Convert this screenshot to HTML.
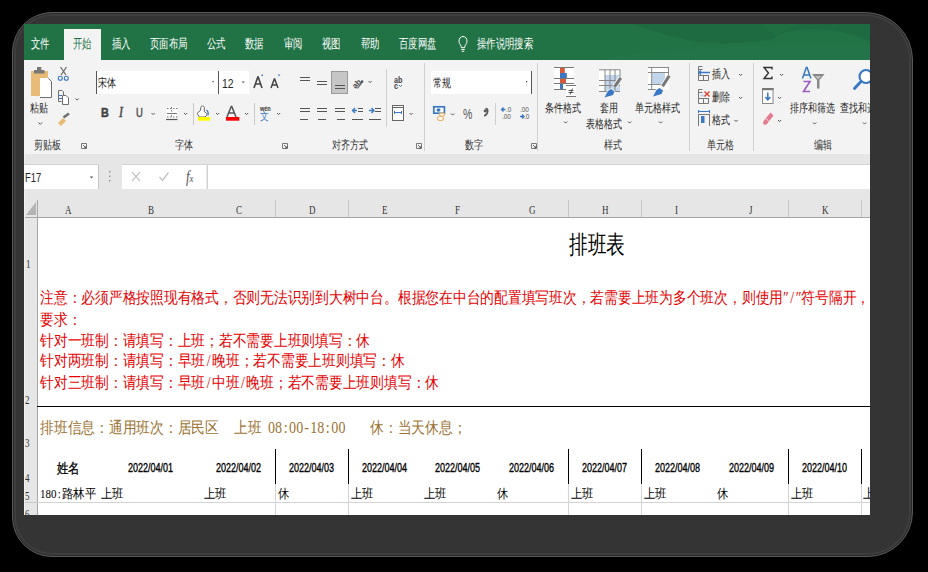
<!DOCTYPE html>
<html><head><meta charset="utf-8">
<style>
*{margin:0;padding:0;box-sizing:border-box}
html,body{width:928px;height:572px;overflow:hidden;background:#000;position:relative;font-family:"Liberation Sans",sans-serif}
.a{position:absolute}
#shadow{left:12px;top:12px;width:901px;height:545px;border-radius:40px 48px 45px 40px;background:#343434;border:1px solid #5a5a5a;box-shadow:inset 0 0 0 1px #2a2a2a,inset 0 0 0 3px #3e3e3e}
#win{left:24px;top:24px;width:846px;height:491px;overflow:hidden;background:#fff}
.t{position:absolute;white-space:nowrap;transform-origin:0 0;line-height:1}
</style></head><body>
<div id="shadow" class="a"></div>
<div id="win" class="a">
<div class="a" style="left:0px;top:0px;width:846px;height:36px;background:#217346;"></div>
<div class="a" style="left:40px;top:5px;width:37px;height:31px;background:#f3f3f3;"></div>
<div class="a" style="left:0px;top:36px;width:846px;height:94px;background:#f3f3f3;"></div>
<div class="a" style="left:0px;top:130px;width:846px;height:46px;background:#e6e6e6;"></div>
<div class="a" style="left:0px;top:176px;width:846px;height:17px;background:#e6e6e6;"></div>
<div class="a" style="left:0px;top:193px;width:846px;height:1px;background:#a6a6a6;"></div>
<div class="a" style="left:0px;top:194px;width:13px;height:297px;background:#e6e6e6;"></div>
<div class="a" style="left:13px;top:176px;width:1px;height:315px;background:#a6a6a6;"></div>
<div class="a" style="left:14px;top:194px;width:832px;height:297px;background:#ffffff;"></div>
<div class="a" style="left:72px;top:47px;width:122px;height:23px;background:#fff;"></div>
<div class="a" style="left:72px;top:47px;width:1px;height:23px;background:#555;"></div>
<div class="a" style="left:194px;top:47px;width:1px;height:23px;background:#555;"></div>
<div class="a" style="left:195px;top:47px;width:30px;height:23px;background:#fff;"></div>
<div class="a" style="left:169px;top:79px;width:1px;height:22px;background:#c8c8c8;"></div>
<div class="a" style="left:230px;top:79px;width:1px;height:22px;background:#c8c8c8;"></div>
<div class="a" style="left:362px;top:45px;width:1px;height:58px;background:#cfcfcf;"></div>
<div class="a" style="left:400px;top:39px;width:1px;height:88px;background:#cfcfcf;"></div>
<div class="a" style="left:407px;top:47px;width:101px;height:23px;background:#fff;"></div>
<div class="a" style="left:507px;top:47px;width:1px;height:23px;background:#555;"></div>
<div class="a" style="left:471px;top:79px;width:1px;height:22px;background:#cfcfcf;"></div>
<div class="a" style="left:513px;top:39px;width:1px;height:88px;background:#cfcfcf;"></div>
<div class="a" style="left:665px;top:39px;width:1px;height:88px;background:#cfcfcf;"></div>
<div class="a" style="left:729px;top:39px;width:1px;height:88px;background:#cfcfcf;"></div>
<div class="a" style="left:0px;top:140px;width:75px;height:25px;background:#fff;border-top:1px solid #d2d2d2;border-right:1px solid #c6c6c6"></div>
<div class="a" style="left:98px;top:140px;width:84px;height:25px;background:#fff;border-top:1px solid #d2d2d2"></div>
<div class="a" style="left:183px;top:140px;width:663px;height:25px;background:#fff;border-top:1px solid #d2d2d2;border-left:1px solid #d2d2d2"></div>
<div class="a" style="left:251px;top:176px;width:1px;height:17px;background:#c6c6c6;"></div>
<div class="a" style="left:324px;top:176px;width:1px;height:17px;background:#c6c6c6;"></div>
<div class="a" style="left:544px;top:176px;width:1px;height:17px;background:#c6c6c6;"></div>
<div class="a" style="left:617px;top:176px;width:1px;height:17px;background:#c6c6c6;"></div>
<div class="a" style="left:764px;top:176px;width:1px;height:17px;background:#c6c6c6;"></div>
<div class="a" style="left:837px;top:176px;width:1px;height:17px;background:#c6c6c6;"></div>
<div class="a" style="left:0px;top:478px;width:13px;height:1px;background:#c6c6c6;"></div>
<div class="a" style="left:13px;top:382px;width:833px;height:1px;background:#000;"></div>
<div class="a" style="left:251px;top:425px;width:1px;height:35px;background:#000;"></div>
<div class="a" style="left:251px;top:460px;width:1px;height:31px;background:#d4d4d4;"></div>
<div class="a" style="left:324px;top:425px;width:1px;height:35px;background:#000;"></div>
<div class="a" style="left:324px;top:460px;width:1px;height:31px;background:#d4d4d4;"></div>
<div class="a" style="left:544px;top:425px;width:1px;height:35px;background:#000;"></div>
<div class="a" style="left:544px;top:460px;width:1px;height:31px;background:#d4d4d4;"></div>
<div class="a" style="left:617px;top:425px;width:1px;height:35px;background:#000;"></div>
<div class="a" style="left:617px;top:460px;width:1px;height:31px;background:#d4d4d4;"></div>
<div class="a" style="left:764px;top:425px;width:1px;height:35px;background:#000;"></div>
<div class="a" style="left:764px;top:460px;width:1px;height:31px;background:#d4d4d4;"></div>
<div class="a" style="left:837px;top:425px;width:1px;height:35px;background:#000;"></div>
<div class="a" style="left:837px;top:460px;width:1px;height:31px;background:#d4d4d4;"></div>
<div class="a" style="left:13px;top:478px;width:833px;height:1px;background:#d4d4d4;"></div>
<div class="a" style="left:0px;top:130px;width:1px;height:10px;background:#f0f0f0;"></div>
<div class="a" style="left:0px;top:165px;width:1px;height:326px;background:#f0f0f0;"></div>
<svg class="a" style="left:0;top:0" width="846" height="491" viewBox="24 24 846 491"><path d="M632 24H870V41C855 35 835 29 815 29C795 29 782 32 772 39C745 44 712 45 692 41C672 37 650 30 632 24Z" fill="#1d6840" opacity=".75"/><path d="M760 24H800C795 27 785 30 775 36C770 30 765 27 760 24Z" fill="#217346" opacity=".5"/><path d="M600 60C640 50 700 48 760 46C800 44 840 42 870 44V60Z" fill="#25784b" opacity=".5"/><path d="M463 36.5c-2.3 0-4 2-4 4.6 0 1.8.9 3 1.6 4 .5.7.7 1.6.7 2.6h3.4c0-1 .2-1.9.7-2.6.7-1 1.6-2.2 1.6-4 0-2.6-1.7-4.6-4-4.6z" fill="none" stroke="#fff" stroke-width="1"/><path d="M461.3 49.5h3.4M461.8 51.3h2.4" stroke="#fff" stroke-width="1"/><rect x="31" y="71" width="17" height="25" fill="#e8bc76"/><rect x="34" y="70" width="10.5" height="3.5" fill="#787878"/><rect x="37" y="67" width="4.3" height="4" fill="#787878"/><path d="M40 78h8.5l3.5 3.5V98H40z" fill="#fff"/><path d="M48.3 78.3l3.2 3.2v16H40" fill="none" stroke="#6e6e6e" stroke-width="1"/><path d="M38.5 122.5l1.8 1.8 1.8-1.8" fill="none" stroke="#555" stroke-width="1"/><path d="M60.5 67l5.5 8M66.5 67l-5.5 8" stroke="#666" stroke-width="1.2"/><circle cx="60.3" cy="78.3" r="2" fill="none" stroke="#3a78c3" stroke-width="1.1"/><circle cx="66.3" cy="78.3" r="2" fill="none" stroke="#3a78c3" stroke-width="1.1"/><path d="M58.5 90.5h3.5l1.5 1.5v3.5" fill="none" stroke="#6e6e6e" stroke-width="1"/><path d="M58.5 90.5v11h3" fill="none" stroke="#6e6e6e" stroke-width="1"/><path d="M62.5 95.5h3.5l2.5 2.5v6.5h-6z" fill="#fff" stroke="#6e6e6e" stroke-width="1"/><path d="M59 95.5h3M59 98.5h3" stroke="#3a78c3" stroke-width="1"/><path d="M75.5 98.5l1.6 1.6 1.6-1.6" fill="none" stroke="#555" stroke-width="1"/><path d="M58 123l5-5 3 3-5 5z" fill="#e8bc76"/><path d="M63.5 117.5l5.5-4" stroke="#6e6e6e" stroke-width="2.6"/><path d="M81.5 143.5h5v5h-5z" fill="none" stroke="#777" stroke-width="1"/><path d="M83 145l3 3M84 148h2v-2" fill="none" stroke="#555" stroke-width=".9"/><rect x="212.5" y="81" width="1.2" height="1.2" fill="#333"/><path d="M241.5 81.5h3.5l-1.75 1.75z" fill="#666"/><path d="M254 88l3.8-11h0.4l3.8 11M255.5 84h5" fill="none" stroke="#444" stroke-width="1.6"/><rect x="261.5" y="74.5" width="1.5" height="1.5" fill="#3a78c3"/><path d="M271 88l3.3-9h0.4l3.3 9M272.3 85h4.4" fill="none" stroke="#444" stroke-width="1.5"/><path d="M277.5 74.5h3l-1.5 1.8z" fill="#3a78c3"/><path d="M151.5 113l1.6 1.6 1.6-1.6" fill="none" stroke="#555" stroke-width="1"/><rect x="166" y="106.5" width="11.5" height="13.5" fill="#fff"/><path d="M167 108.5h1.5M170 108.5h1.5M173 108.5h1.5M176 108.5h1.5M167 113.5h10M167 117h1.5M170 117h1.5M173 117h1.5M176 117h1.5" stroke="#777" stroke-width="1"/><path d="M171.5 107v1.5M171.5 110v1.5M171.5 115v1.5" stroke="#777" stroke-width="1"/><path d="M166 119.5h11.5" stroke="#555" stroke-width="1.2"/><path d="M184 113l1.6 1.6 1.6-1.6" fill="none" stroke="#555" stroke-width="1"/><path d="M202.5 106c1.2 0 1.8.8 1.8 2v3.5l2 1.5c.8.6.8 1.6.2 2.4l-1.5 1.6h-5.5l-1.8-2.5c-.5-.8-.3-1.6.4-2.2l2.6-2v-2.3c0-1.2.6-2 1.8-2z" fill="#fff" stroke="#666" stroke-width="1"/><path d="M206.5 110c1.3.8 2 2.5 1.5 5.5" fill="none" stroke="#3a78c3" stroke-width="1.3"/><rect x="198" y="117" width="12.3" height="3.7" fill="#ffff00"/><path d="M216 113l1.6 1.6 1.6-1.6" fill="none" stroke="#555" stroke-width="1"/><path d="M227 117l4.2-10.5h.6l4.2 10.5M228.8 113h5.4" fill="none" stroke="#555" stroke-width="1.5"/><rect x="226" y="117" width="13.3" height="3.7" fill="#ff0000"/><path d="M245 113l1.6 1.6 1.6-1.6" fill="none" stroke="#555" stroke-width="1"/><path d="M277 113l1.6 1.6 1.6-1.6" fill="none" stroke="#555" stroke-width="1"/><path d="M282.5 143.5h5v5h-5z" fill="none" stroke="#777" stroke-width="1"/><path d="M284 145l3 3M285 148h2v-2" fill="none" stroke="#555" stroke-width=".9"/><path d="M300 77.5h10M300 80.5h10" stroke="#555" stroke-width="1"/><path d="M317 81.5h10M317 84.5h10" stroke="#555" stroke-width="1"/><rect x="331.5" y="71.5" width="16" height="22" fill="#c6c6c6" stroke="#9a9a9a" stroke-width="1"/><path d="M335 85.5h10M335 88.5h10" stroke="#555" stroke-width="1"/><text x="352" y="87" font-family="Liberation Sans" font-size="8" font-weight="bold" fill="#444" transform="rotate(-48 356 84)">ab</text><path d="M357.5 88.5l4.5-6" stroke="#555" stroke-width="1.1"/><rect x="361" y="80.5" width="2.2" height="2.2" fill="#444"/><path d="M368.5 81l1.6 1.6 1.6-1.6" fill="none" stroke="#555" stroke-width="1"/><path d="M399 85l1.5 1.5 1.5-1.5" fill="none" stroke="#3a78c3" stroke-width="1"/><path d="M300 108.5h10M300 111.5h10" stroke="#555" stroke-width="1"/><path d="M317 108.5h10M317 111.5h10" stroke="#555" stroke-width="1"/><path d="M335 108.5h10M335 111.5h10" stroke="#555" stroke-width="1"/><path d="M300 119.5h8M318 119.5h8M337 119.5h8" stroke="#555" stroke-width="1"/><path d="M358 108.5h5M358 111.5h5M352 119.5h11M369 119.5h12M375 108.5h6M375 111.5h6" stroke="#555" stroke-width="1"/><path d="M357 110.5h-4.5M355 108l-2.5 2.5 2.5 2.5M369 110.5h4.5M371.5 108l2.5 2.5-2.5 2.5" fill="none" stroke="#3a78c3" stroke-width="1.4"/><rect x="392.5" y="105.5" width="11" height="15" fill="#fff" stroke="#666" stroke-width="1"/><path d="M392.5 107.5h11M394 112.5h8" stroke="#666" stroke-width="1"/><path d="M394 112.5h8M394.5 111v3M401.5 111v3" stroke="#3a78c3" stroke-width="1"/><path d="M409.5 113l1.6 1.6 1.6-1.6" fill="none" stroke="#555" stroke-width="1"/><path d="M416.5 143.5h5v5h-5z" fill="none" stroke="#777" stroke-width="1"/><path d="M418 145l3 3M419 148h2v-2" fill="none" stroke="#555" stroke-width=".9"/><rect x="526" y="81" width="1.2" height="1.2" fill="#333"/><rect x="433.8" y="106.8" width="10.6" height="6.4" fill="#fff" stroke="#3a78c3" stroke-width="1.7"/><ellipse cx="438.5" cy="110" rx="2" ry="1.8" fill="#3a78c3"/><ellipse cx="440.5" cy="118.5" rx="3" ry="2" fill="#fff" stroke="#e8b36a" stroke-width="1.1"/><ellipse cx="442" cy="114.5" rx="2.5" ry="1.6" fill="#fff" stroke="#e8b36a" stroke-width="1.1"/><path d="M451 113.5l1.6 1.6 1.6-1.6" fill="none" stroke="#555" stroke-width="1"/><path d="M485.5 108.5c1.8 0 2.2 1.2 2.2 2.5 0 2-1.4 4-3.5 5" fill="none" stroke="#555" stroke-width="1.6"/><circle cx="485.3" cy="110.8" r="1.6" fill="#555"/><path d="M505.5 109.5h-4M503.5 107.5l-2 2 2 2" fill="none" stroke="#3a78c3" stroke-width="1.3"/><path d="M520 116.5h4M522 114.5l2 2-2 2" fill="none" stroke="#3a78c3" stroke-width="1.3"/><path d="M531.5 143.5h5v5h-5z" fill="none" stroke="#777" stroke-width="1"/><path d="M533 145l3 3M534 148h2v-2" fill="none" stroke="#555" stroke-width=".9"/><rect x="554" y="67" width="20" height="22.5" fill="#fff"/><path d="M554 67.5h20M554 78.5h20M554 83.5h20M554 89.5h12" stroke="#777" stroke-width="1"/><rect x="560" y="68" width="4.8" height="5" fill="#d9573b"/><rect x="560" y="73" width="6.8" height="5" fill="#3a78c3"/><rect x="560" y="79" width="6" height="4" fill="#d9573b"/><rect x="560" y="84" width="3" height="5" fill="#3a78c3"/><rect x="566" y="85" width="10" height="12" fill="#fff"/><path d="M566 85.5h10M566 96.5h10" stroke="#777" stroke-width="1"/><path d="M568.5 90.5h5M568.5 92.5h5M572.5 88.5l-2.5 6" stroke="#333" stroke-width=".8"/><path d="M564 121.5l1.6 1.6 1.6-1.6" fill="none" stroke="#555" stroke-width="1"/><rect x="599" y="69.5" width="21" height="22" fill="#fff"/><rect x="605" y="75" width="15" height="17" fill="#c1d6ed"/><path d="M599 69.8h21M599 80.5h21M599 85.5h21M599 91.5h21M605 69.5v22M610 69.5v22M615 69.5v22M620 69.5v10" stroke="#888" stroke-width="1"/><path d="M621 77.5l-6.5 9.5" stroke="#f3f3f3" stroke-width="5"/><path d="M620.8 77.8l-6.3 9" stroke="#777" stroke-width="3"/><path d="M604.5 97.5l3.5-6.5 3-2 3.5 2.5-1.5 3.5z" fill="#f3f3f3" stroke="#f3f3f3" stroke-width="1.5"/><path d="M604.5 97.5l3.5-6.5 3-2 3.5 2.5-1.5 3.5z" fill="#3a78c3"/><path d="M628 121.5l1.6 1.6 1.6-1.6" fill="none" stroke="#555" stroke-width="1"/><rect x="648" y="67" width="21" height="22.6" fill="#fff"/><rect x="652" y="73" width="13" height="11" fill="#c1d6ed"/><path d="M648 67.5h21M648 72.5h21M648 84.5h18M648 89.5h8M651.7 67v22.6M668.5 67v8" stroke="#888" stroke-width="1"/><path d="M669.5 75.5l-7 11" stroke="#f3f3f3" stroke-width="5"/><path d="M669.3 75.8l-6.8 10.5" stroke="#777" stroke-width="3"/><path d="M653 96.5l3.5-6.5 3-2 3.5 2.5-1.5 3.5z" fill="#f3f3f3" stroke="#f3f3f3" stroke-width="1.5"/><path d="M653 96.5l3.5-6.5 3-2 3.5 2.5-1.5 3.5z" fill="#3a78c3"/><path d="M659 121.5l1.6 1.6 1.6-1.6" fill="none" stroke="#555" stroke-width="1"/><path d="M698.5 66.5v14M703.5 75v5.5M698.5 75.5h10M698.5 80.5h10M708.5 75v5.5M698.5 66.5h4M698.5 69.5h4" fill="none" stroke="#777" stroke-width="1"/><path d="M703 72.5h7M699 72.5h4M701 70.5l-2 2 2 2" fill="none" stroke="#3a78c3" stroke-width="1.3"/><path d="M703.5 71.5h7" stroke="#c1d6ed" stroke-width="1"/><path d="M739 74l1.6 1.6 1.6-1.6" fill="none" stroke="#555" stroke-width="1"/><path d="M698.5 89.5v14M703.5 98v5.5M698.5 98.5h10M698.5 103.5h10M708.5 98v5.5M698.5 89.5h4M698.5 92.5h4" fill="none" stroke="#777" stroke-width="1"/><path d="M700 95.5h5" stroke="#c1d6ed" stroke-width="2"/><path d="M704.5 91.5l5 5M709.5 91.5l-5 5" stroke="#d9412b" stroke-width="1.4"/><path d="M739 97l1.6 1.6 1.6-1.6" fill="none" stroke="#555" stroke-width="1"/><path d="M698.5 114v12M709.5 114v12M698.5 114.5h11" fill="none" stroke="#777" stroke-width="1"/><rect x="701" y="116" width="3.5" height="7" fill="#3a78c3"/><path d="M698.5 111.5h11M698.5 110v3M709.5 110v3" stroke="#3a78c3" stroke-width="1"/><path d="M734.5 120l1.6 1.6 1.6-1.6" fill="none" stroke="#555" stroke-width="1"/><path d="M772 69.5v-2h-8l4.5 5.5-4.5 5.5h8v-2" fill="none" stroke="#333" stroke-width="1.4"/><path d="M780 74l1.6 1.6 1.6-1.6" fill="none" stroke="#555" stroke-width="1"/><rect x="762.5" y="88.5" width="10.5" height="15" fill="#fff" stroke="#888" stroke-width="1"/><rect x="762" y="88" width="11.5" height="2.2" fill="#777"/><path d="M767.8 92.5v7M765.3 97l2.5 2.8 2.5-2.8" fill="none" stroke="#3a78c3" stroke-width="1.5"/><path d="M778 97l1.6 1.6 1.6-1.6" fill="none" stroke="#555" stroke-width="1"/><path d="M764 120.5l6.5-8 3 3-6.5 8.5c-1 1-2.5 1-3.3.2-.8-.8-.8-2.5.3-3.7z" fill="#e27b8e"/><path d="M766 118.5l3 3" stroke="#fff" stroke-width=".8"/><path d="M778 120l1.6 1.6 1.6-1.6" fill="none" stroke="#555" stroke-width="1"/><path d="M802.5 78.5l3.8-11h.8l3.8 11M804 75h6" fill="none" stroke="#3a78c3" stroke-width="1.5"/><path d="M803.5 81.5h6.5l-6.5 10h6.5" fill="none" stroke="#9b59c7" stroke-width="1.6"/><path d="M812 74h12.5l-5 6v8.5h-2.5v-8.5z" fill="#888"/><path d="M815 76h6.5l-3.2 3.5z" fill="#f3f3f3" opacity=".5"/><path d="M813 122.5l1.6 1.6 1.6-1.6" fill="none" stroke="#555" stroke-width="1"/><circle cx="866" cy="76.5" r="6.5" fill="#fff" stroke="#3a78c3" stroke-width="2.2"/><path d="M860.5 82l-6 6.5" stroke="#3a78c3" stroke-width="3" stroke-linecap="round"/><path d="M863 122.5l1.6 1.6 1.6-1.6" fill="none" stroke="#555" stroke-width="1"/><path d="M89.5 176.5h4l-2 2z" fill="#666"/><rect x="109" y="171" width="1.5" height="1.5" fill="#999"/><rect x="109" y="175.5" width="1.5" height="1.5" fill="#999"/><rect x="109" y="180" width="1.5" height="1.5" fill="#999"/><path d="M132 172l8 9M140 172l-8 9" stroke="#b4b4b4" stroke-width="1.1"/><path d="M159.5 177l3 3.5 6-8" fill="none" stroke="#c4c4c4" stroke-width="1.4"/><path d="M36 202v13h-10z" fill="#b4b4b4"/></svg>
<div class="t" style="left:7px;top:14px;font-size:12.5px;color:#ffffff;transform:scaleX(0.72);font-family:'Liberation Sans',sans-serif;font-weight:normal;">文件</div>
<div class="t" style="left:88px;top:14px;font-size:12.5px;color:#ffffff;transform:scaleX(0.72);font-family:'Liberation Sans',sans-serif;font-weight:normal;">插入</div>
<div class="t" style="left:126px;top:14px;font-size:12.5px;color:#ffffff;transform:scaleX(0.72);font-family:'Liberation Sans',sans-serif;font-weight:normal;">页面布局</div>
<div class="t" style="left:183px;top:14px;font-size:12.5px;color:#ffffff;transform:scaleX(0.72);font-family:'Liberation Sans',sans-serif;font-weight:normal;">公式</div>
<div class="t" style="left:221px;top:14px;font-size:12.5px;color:#ffffff;transform:scaleX(0.72);font-family:'Liberation Sans',sans-serif;font-weight:normal;">数据</div>
<div class="t" style="left:260px;top:14px;font-size:12.5px;color:#ffffff;transform:scaleX(0.72);font-family:'Liberation Sans',sans-serif;font-weight:normal;">审阅</div>
<div class="t" style="left:298px;top:14px;font-size:12.5px;color:#ffffff;transform:scaleX(0.72);font-family:'Liberation Sans',sans-serif;font-weight:normal;">视图</div>
<div class="t" style="left:337px;top:14px;font-size:12.5px;color:#ffffff;transform:scaleX(0.72);font-family:'Liberation Sans',sans-serif;font-weight:normal;">帮助</div>
<div class="t" style="left:375px;top:14px;font-size:12.5px;color:#ffffff;transform:scaleX(0.72);font-family:'Liberation Sans',sans-serif;font-weight:normal;">百度网盘</div>
<div class="t" style="left:453px;top:14px;font-size:12.5px;color:#ffffff;transform:scaleX(0.72);font-family:'Liberation Sans',sans-serif;font-weight:normal;">操作说明搜索</div>
<div class="t" style="left:49px;top:14px;font-size:12.5px;color:#217346;transform:scaleX(0.72);font-family:'Liberation Sans',sans-serif;font-weight:normal;">开始</div>
<div class="t" style="left:6px;top:78px;font-size:12px;color:#262626;transform:scaleX(0.75);font-family:'Liberation Sans',sans-serif;font-weight:normal;">粘贴</div>
<div class="t" style="left:9.5px;top:115px;font-size:12px;color:#333;transform:scaleX(0.75);font-family:'Liberation Sans',sans-serif;font-weight:normal;">剪贴板</div>
<div class="t" style="left:73.5px;top:53px;font-size:12px;color:#262626;transform:scaleX(0.75);font-family:'Liberation Sans',sans-serif;font-weight:normal;">宋体</div>
<div class="t" style="left:198px;top:52.5px;font-size:13px;color:#262626;transform:scaleX(0.8);font-family:'Liberation Sans',sans-serif;font-weight:normal;">12</div>
<div class="t" style="left:76.5px;top:81.5px;font-size:13.5px;color:#444;transform:scaleX(0.8);font-family:'Liberation Sans',sans-serif;font-weight:bold;-webkit-text-stroke:.5px #444">B</div>
<div class="t" style="left:95px;top:81.5px;font-size:14px;color:#444;transform:scaleX(0.85);font-family:'Liberation Serif',serif;font-weight:normal;font-style:italic;-webkit-text-stroke:.4px #444">I</div>
<div class="t" style="left:111.5px;top:81.5px;font-size:13.5px;color:#444;transform:scaleX(0.7);font-family:'Liberation Sans',sans-serif;font-weight:normal;-webkit-text-stroke:.4px #444">U</div>
<div class="t" style="left:235.5px;top:81.5px;font-size:6.5px;color:#333;transform:scaleX(0.85);font-family:'Liberation Sans',sans-serif;font-weight:bold;">wén</div>
<div class="t" style="left:235.5px;top:86.5px;font-size:11px;color:#3a78c3;transform:scaleX(0.8);font-family:'Liberation Sans',sans-serif;font-weight:normal;">文</div>
<div class="t" style="left:151px;top:115px;font-size:12px;color:#333;transform:scaleX(0.75);font-family:'Liberation Sans',sans-serif;font-weight:normal;">字体</div>
<div class="t" style="left:370px;top:51.5px;font-size:8.5px;color:#444;transform:scaleX(0.85);font-family:'Liberation Sans',sans-serif;font-weight:bold;">ab</div>
<div class="t" style="left:370px;top:58px;font-size:8.5px;color:#444;transform:scaleX(0.85);font-family:'Liberation Sans',sans-serif;font-weight:bold;">c</div>
<div class="t" style="left:308px;top:115px;font-size:12px;color:#333;transform:scaleX(0.75);font-family:'Liberation Sans',sans-serif;font-weight:normal;">对齐方式</div>
<div class="t" style="left:409px;top:53px;font-size:12px;color:#262626;transform:scaleX(0.75);font-family:'Liberation Sans',sans-serif;font-weight:normal;">常规</div>
<div class="t" style="left:438.5px;top:81.5px;font-size:15px;color:#555;transform:scaleX(0.7);font-family:'Liberation Sans',sans-serif;font-weight:normal;">%</div>
<div class="t" style="left:481.5px;top:82px;font-size:8px;color:#555;transform:scaleX(0.8);font-family:'Liberation Sans',sans-serif;font-weight:normal;">.0</div>
<div class="t" style="left:478px;top:88.5px;font-size:8px;color:#555;transform:scaleX(0.8);font-family:'Liberation Sans',sans-serif;font-weight:normal;">.00</div>
<div class="t" style="left:495.5px;top:82px;font-size:8px;color:#555;transform:scaleX(0.8);font-family:'Liberation Sans',sans-serif;font-weight:normal;">.00</div>
<div class="t" style="left:500px;top:88.5px;font-size:8px;color:#555;transform:scaleX(0.8);font-family:'Liberation Sans',sans-serif;font-weight:normal;">.0</div>
<div class="t" style="left:441px;top:115px;font-size:12px;color:#333;transform:scaleX(0.75);font-family:'Liberation Sans',sans-serif;font-weight:normal;">数字</div>
<div class="t" style="left:521px;top:77.5px;font-size:12px;color:#262626;transform:scaleX(0.75);font-family:'Liberation Sans',sans-serif;font-weight:normal;">条件格式</div>
<div class="t" style="left:576px;top:77.5px;font-size:12px;color:#262626;transform:scaleX(0.75);font-family:'Liberation Sans',sans-serif;font-weight:normal;">套用</div>
<div class="t" style="left:562px;top:93.5px;font-size:12px;color:#262626;transform:scaleX(0.75);font-family:'Liberation Sans',sans-serif;font-weight:normal;">表格格式</div>
<div class="t" style="left:611px;top:77.5px;font-size:12px;color:#262626;transform:scaleX(0.75);font-family:'Liberation Sans',sans-serif;font-weight:normal;">单元格样式</div>
<div class="t" style="left:580px;top:115px;font-size:12px;color:#333;transform:scaleX(0.75);font-family:'Liberation Sans',sans-serif;font-weight:normal;">样式</div>
<div class="t" style="left:688px;top:44px;font-size:12px;color:#262626;transform:scaleX(0.75);font-family:'Liberation Sans',sans-serif;font-weight:normal;">插入</div>
<div class="t" style="left:688px;top:66.5px;font-size:12px;color:#262626;transform:scaleX(0.75);font-family:'Liberation Sans',sans-serif;font-weight:normal;">删除</div>
<div class="t" style="left:688px;top:89.5px;font-size:12px;color:#262626;transform:scaleX(0.75);font-family:'Liberation Sans',sans-serif;font-weight:normal;">格式</div>
<div class="t" style="left:683px;top:115px;font-size:12px;color:#333;transform:scaleX(0.75);font-family:'Liberation Sans',sans-serif;font-weight:normal;">单元格</div>
<div class="t" style="left:766px;top:77.5px;font-size:12px;color:#262626;transform:scaleX(0.75);font-family:'Liberation Sans',sans-serif;font-weight:normal;">排序和筛选</div>
<div class="t" style="left:816px;top:77.5px;font-size:12px;color:#262626;transform:scaleX(0.75);font-family:'Liberation Sans',sans-serif;font-weight:normal;">查找和选择</div>
<div class="t" style="left:790px;top:115px;font-size:12px;color:#333;transform:scaleX(0.75);font-family:'Liberation Sans',sans-serif;font-weight:normal;">编辑</div>
<div class="t" style="left:1px;top:147px;font-size:13px;color:#262626;transform:scaleX(0.72);font-family:'Liberation Sans',sans-serif;font-weight:normal;">F17</div>
<div class="t" style="left:162px;top:144.5px;font-size:16px;color:#555;transform:scaleX(0.8);font-family:'Liberation Serif',serif;font-weight:normal;"><i>f</i><span style='font-size:11px'><i>x</i></span></div>
<div class="t" style="left:41.0px;top:179.5px;font-size:12px;color:#333;transform:scaleX(0.75);font-family:'Liberation Serif',serif;font-weight:normal;">A</div>
<div class="t" style="left:123.5px;top:179.5px;font-size:12px;color:#333;transform:scaleX(0.75);font-family:'Liberation Serif',serif;font-weight:normal;">B</div>
<div class="t" style="left:211.5px;top:179.5px;font-size:12px;color:#333;transform:scaleX(0.75);font-family:'Liberation Serif',serif;font-weight:normal;">C</div>
<div class="t" style="left:284.5px;top:179.5px;font-size:12px;color:#333;transform:scaleX(0.75);font-family:'Liberation Serif',serif;font-weight:normal;">D</div>
<div class="t" style="left:357.5px;top:179.5px;font-size:12px;color:#333;transform:scaleX(0.75);font-family:'Liberation Serif',serif;font-weight:normal;">E</div>
<div class="t" style="left:430.5px;top:179.5px;font-size:12px;color:#333;transform:scaleX(0.75);font-family:'Liberation Serif',serif;font-weight:normal;">F</div>
<div class="t" style="left:504.5px;top:179.5px;font-size:12px;color:#333;transform:scaleX(0.75);font-family:'Liberation Serif',serif;font-weight:normal;">G</div>
<div class="t" style="left:577.5px;top:179.5px;font-size:12px;color:#333;transform:scaleX(0.75);font-family:'Liberation Serif',serif;font-weight:normal;">H</div>
<div class="t" style="left:650.5px;top:179.5px;font-size:12px;color:#333;transform:scaleX(0.75);font-family:'Liberation Serif',serif;font-weight:normal;">I</div>
<div class="t" style="left:724.5px;top:179.5px;font-size:12px;color:#333;transform:scaleX(0.75);font-family:'Liberation Serif',serif;font-weight:normal;">J</div>
<div class="t" style="left:797.5px;top:179.5px;font-size:12px;color:#333;transform:scaleX(0.75);font-family:'Liberation Serif',serif;font-weight:normal;">K</div>
<div class="t" style="left:2px;top:234px;font-size:12px;color:#333;transform:scaleX(0.75);font-family:'Liberation Serif',serif;font-weight:normal;">1</div>
<div class="t" style="left:1px;top:370px;font-size:12px;color:#333;transform:scaleX(0.75);font-family:'Liberation Serif',serif;font-weight:normal;">2</div>
<div class="t" style="left:1px;top:412.5px;font-size:12px;color:#333;transform:scaleX(0.75);font-family:'Liberation Serif',serif;font-weight:normal;">3</div>
<div class="t" style="left:1px;top:447.5px;font-size:12px;color:#333;transform:scaleX(0.75);font-family:'Liberation Serif',serif;font-weight:normal;">4</div>
<div class="t" style="left:1px;top:465.5px;font-size:12px;color:#333;transform:scaleX(0.75);font-family:'Liberation Serif',serif;font-weight:normal;">5</div>
<div class="t" style="left:1px;top:484px;font-size:12px;color:#333;transform:scaleX(0.75);font-family:'Liberation Serif',serif;font-weight:normal;">6</div>
<div class="t" style="left:544.5px;top:208.5px;font-size:24.5px;color:#000;transform:scaleX(0.745);font-family:'Liberation Serif',serif;font-weight:normal;">排班表</div>
<div class="t" style="left:16px;top:265.5px;font-size:16px;color:#e60000;transform:scaleX(0.86);font-family:'Liberation Serif',serif;font-weight:300;">注意：必须严格按照现有格式，否则无法识别到大树中台。根据您在中台的配置填写班次，若需要上班为多个班次，则使用″<span style="display:inline-block;width:8px;text-align:center">/</span>″符号隔开，</div>
<div class="t" style="left:16px;top:288px;font-size:16px;color:#e60000;transform:scaleX(0.86);font-family:'Liberation Serif',serif;font-weight:300;">要求：</div>
<div class="t" style="left:16px;top:308.5px;font-size:16px;color:#e60000;transform:scaleX(0.86);font-family:'Liberation Serif',serif;font-weight:300;">针对一班制：请填写：上班；若不需要上班则填写：休</div>
<div class="t" style="left:16px;top:329px;font-size:16px;color:#e60000;transform:scaleX(0.86);font-family:'Liberation Serif',serif;font-weight:300;">针对两班制：请填写：早班<span style="display:inline-block;width:8px;text-align:center">/</span>晚班；若不需要上班则填写：休</div>
<div class="t" style="left:16px;top:350.5px;font-size:16px;color:#e60000;transform:scaleX(0.86);font-family:'Liberation Serif',serif;font-weight:300;">针对三班制：请填写：早班<span style="display:inline-block;width:8px;text-align:center">/</span>中班<span style="display:inline-block;width:8px;text-align:center">/</span>晚班；若不需要上班则填写：休</div>
<div class="t" style="left:16px;top:396px;font-size:16px;color:#9c7232;transform:scaleX(0.86);font-family:'Liberation Serif',serif;font-weight:300;">排班信息：通用班次：居民区</div>
<div class="t" style="left:210px;top:396px;font-size:16px;color:#9c7232;transform:scaleX(0.86);font-family:'Liberation Serif',serif;font-weight:300;">上班</div>
<div class="t" style="left:244px;top:396px;font-size:16px;color:#9c7232;transform:scaleX(0.88);font-family:'Liberation Serif',serif;font-weight:300;"><span style="display:inline-block;width:8px;text-align:center">0</span><span style="display:inline-block;width:8px;text-align:center">8</span><span style="display:inline-block;width:8px;text-align:center">:</span><span style="display:inline-block;width:8px;text-align:center">0</span><span style="display:inline-block;width:8px;text-align:center">0</span><span style="display:inline-block;width:8px;text-align:center">-</span><span style="display:inline-block;width:8px;text-align:center">1</span><span style="display:inline-block;width:8px;text-align:center">8</span><span style="display:inline-block;width:8px;text-align:center">:</span><span style="display:inline-block;width:8px;text-align:center">0</span><span style="display:inline-block;width:8px;text-align:center">0</span></div>
<div class="t" style="left:346px;top:396px;font-size:16px;color:#9c7232;transform:scaleX(0.86);font-family:'Liberation Serif',serif;font-weight:300;">休：当天休息；</div>
<div class="t" style="left:33px;top:437.5px;font-size:13.5px;color:#000;transform:scaleX(0.82);font-family:'Liberation Serif',serif;font-weight:normal;-webkit-text-stroke:.3px #000">姓名</div>
<div class="t" style="left:104px;top:437.5px;font-size:12.5px;color:#000;transform:scaleX(0.72);font-family:'Liberation Sans',sans-serif;font-weight:normal;-webkit-text-stroke:.35px #000">2022/04/01</div>
<div class="t" style="left:192px;top:437.5px;font-size:12.5px;color:#000;transform:scaleX(0.72);font-family:'Liberation Sans',sans-serif;font-weight:normal;-webkit-text-stroke:.35px #000">2022/04/02</div>
<div class="t" style="left:265px;top:437.5px;font-size:12.5px;color:#000;transform:scaleX(0.72);font-family:'Liberation Sans',sans-serif;font-weight:normal;-webkit-text-stroke:.35px #000">2022/04/03</div>
<div class="t" style="left:338px;top:437.5px;font-size:12.5px;color:#000;transform:scaleX(0.72);font-family:'Liberation Sans',sans-serif;font-weight:normal;-webkit-text-stroke:.35px #000">2022/04/04</div>
<div class="t" style="left:411px;top:437.5px;font-size:12.5px;color:#000;transform:scaleX(0.72);font-family:'Liberation Sans',sans-serif;font-weight:normal;-webkit-text-stroke:.35px #000">2022/04/05</div>
<div class="t" style="left:485px;top:437.5px;font-size:12.5px;color:#000;transform:scaleX(0.72);font-family:'Liberation Sans',sans-serif;font-weight:normal;-webkit-text-stroke:.35px #000">2022/04/06</div>
<div class="t" style="left:558px;top:437.5px;font-size:12.5px;color:#000;transform:scaleX(0.72);font-family:'Liberation Sans',sans-serif;font-weight:normal;-webkit-text-stroke:.35px #000">2022/04/07</div>
<div class="t" style="left:631px;top:437.5px;font-size:12.5px;color:#000;transform:scaleX(0.72);font-family:'Liberation Sans',sans-serif;font-weight:normal;-webkit-text-stroke:.35px #000">2022/04/08</div>
<div class="t" style="left:705px;top:437.5px;font-size:12.5px;color:#000;transform:scaleX(0.72);font-family:'Liberation Sans',sans-serif;font-weight:normal;-webkit-text-stroke:.35px #000">2022/04/09</div>
<div class="t" style="left:778px;top:437.5px;font-size:12.5px;color:#000;transform:scaleX(0.72);font-family:'Liberation Sans',sans-serif;font-weight:normal;-webkit-text-stroke:.35px #000">2022/04/10</div>
<div class="t" style="left:15.5px;top:464px;font-size:12.5px;color:#000;transform:scaleX(0.88);font-family:'Liberation Serif',serif;font-weight:300;"><span style="display:inline-block;width:6.25px;text-align:center">1</span><span style="display:inline-block;width:6.25px;text-align:center">8</span><span style="display:inline-block;width:6.25px;text-align:center">0</span><span style="display:inline-block;width:6.25px;text-align:center">:</span>路林平</div>
<div class="t" style="left:77px;top:464px;font-size:12.5px;color:#000;transform:scaleX(0.87);font-family:'Liberation Serif',serif;font-weight:300;">上班</div>
<div class="t" style="left:179.5px;top:464px;font-size:12.5px;color:#000;transform:scaleX(0.87);font-family:'Liberation Serif',serif;font-weight:300;">上班</div>
<div class="t" style="left:253.5px;top:464px;font-size:12.5px;color:#000;transform:scaleX(0.87);font-family:'Liberation Serif',serif;font-weight:300;">休</div>
<div class="t" style="left:327px;top:464px;font-size:12.5px;color:#000;transform:scaleX(0.87);font-family:'Liberation Serif',serif;font-weight:300;">上班</div>
<div class="t" style="left:400px;top:464px;font-size:12.5px;color:#000;transform:scaleX(0.87);font-family:'Liberation Serif',serif;font-weight:300;">上班</div>
<div class="t" style="left:473px;top:464px;font-size:12.5px;color:#000;transform:scaleX(0.87);font-family:'Liberation Serif',serif;font-weight:300;">休</div>
<div class="t" style="left:547px;top:464px;font-size:12.5px;color:#000;transform:scaleX(0.87);font-family:'Liberation Serif',serif;font-weight:300;">上班</div>
<div class="t" style="left:620px;top:464px;font-size:12.5px;color:#000;transform:scaleX(0.87);font-family:'Liberation Serif',serif;font-weight:300;">上班</div>
<div class="t" style="left:693px;top:464px;font-size:12.5px;color:#000;transform:scaleX(0.87);font-family:'Liberation Serif',serif;font-weight:300;">休</div>
<div class="t" style="left:766.5px;top:464px;font-size:12.5px;color:#000;transform:scaleX(0.87);font-family:'Liberation Serif',serif;font-weight:300;">上班</div>
<div class="t" style="left:839px;top:464px;font-size:12.5px;color:#000;transform:scaleX(0.87);font-family:'Liberation Serif',serif;font-weight:300;">上班</div>
</div>
</body></html>
